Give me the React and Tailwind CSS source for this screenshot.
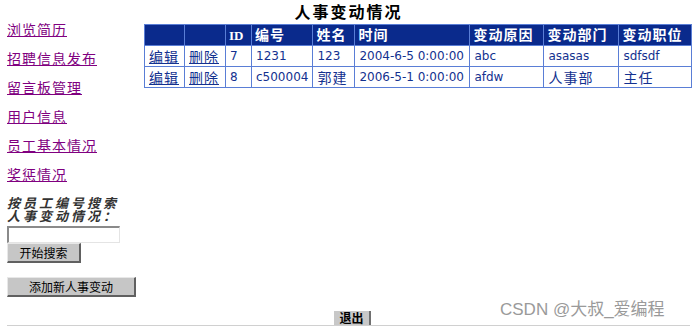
import React from 'react';

// 人事变动情况 page: left menu, change-record table, logout bar

const menuLinks = ['浏览简历', '招聘信息发布', '留言板管理', '用户信息', '员工基本情况', '奖惩情况'];

const records = [
  { id: '7', code: '1231', name: '123', time: '2004-6-5 0:00:00', reason: 'abc', dept: 'asasas', post: 'sdfsdf' },
  { id: '8', code: 'c500004', name: '郭建', time: '2006-5-1 0:00:00', reason: 'afdw', dept: '人事部', post: '主任' },
];

const isCjk = (s) => /[\u4e00-\u9fff]/.test(s);

const Cell = ({ children, className = '' }) => {
  const cjk = typeof children === 'string' && isCjk(children);
  return (
    <td
      className={`border border-[#5a7ed6] px-[4px] h-[21px] text-[#13318f] whitespace-nowrap ${
        cjk ? "text-[14px] tracking-[1px] font-['Noto_Sans_CJK_SC',sans-serif]" : 'text-[12px]'
      } ${className}`}
    >
      {children}
    </td>
  );
};

const Head = ({ children, className = '' }) => (
  <th
    className={`border border-[#5a7ed6] bg-[#0a2a8c] px-[3px] h-[21px] text-left font-bold text-white whitespace-nowrap ${className}`}
  >
    {children}
  </th>
);

const RecordTable = () => (
  <table className="self-start mt-[3px] border-collapse font-['DejaVu_Sans','Noto_Sans_CJK_SC',sans-serif] leading-[19px]">
    <thead>
      <tr>
        <Head className="w-[40px]"></Head>
        <Head className="w-[41px]"></Head>
        <Head className="w-[26px] text-[13px] font-['Liberation_Serif',serif]">ID</Head>
        <Head className="w-[61px] text-[14px] tracking-[1px]">编号</Head>
        <Head className="w-[42px] text-[14px] tracking-[1px]">姓名</Head>
        <Head className="w-[115px] text-[14px] tracking-[1px]">时间</Head>
        <Head className="w-[74px] text-[14px] tracking-[1px]">变动原因</Head>
        <Head className="w-[75px] text-[14px] tracking-[1px]">变动部门</Head>
        <Head className="w-[73px] text-[14px] tracking-[1px]">变动职位</Head>
      </tr>
    </thead>
    <tbody>
      {records.map((r) => (
        <tr key={r.id}>
          <Cell className="underline text-[#0b2a85]">编辑</Cell>
          <Cell className="underline text-[#0b2a85]">删除</Cell>
          <Cell className="px-[3px]">{r.id}</Cell>
          <Cell>{r.code}</Cell>
          <Cell>{r.name}</Cell>
          <Cell>{r.time}</Cell>
          <Cell className="text-[11px]">{r.reason}</Cell>
          <Cell className="text-[11px]">{r.dept}</Cell>
          <Cell className="text-[11px]">{r.post}</Cell>
        </tr>
      ))}
    </tbody>
  </table>
);

const Win95Button = ({ children, className = '' }) => (
  <button
    className={`block bg-[#c6c6c6] border border-t-[#e8e8e8] border-l-[#e8e8e8] border-b-[#606060] border-r-[#606060] border-b-2 border-r-2 text-[12px] leading-none text-black ${className}`}
  >
    {children}
  </button>
);

const Sidebar = () => (
  <div className="w-[144px] shrink-0 pl-[7px] flex flex-col">
    <div className="flex flex-col gap-[15px]">
      {menuLinks.map((t) => (
        <div key={t} className="h-[14px] leading-[14px]">
          <a href="#" className="text-[14px] tracking-[1px] text-[#800080] underline">
            {t}
          </a>
        </div>
      ))}
    </div>
    <div className="mt-[16px] text-[13px] leading-[13px] tracking-[3px] font-bold italic text-[#333]">
      按员工编号搜索
      <br />
      人事变动情况：
    </div>
    <input
      type="text"
      className="block mt-[4px] w-[113px] h-[17px] bg-white border border-t-2 border-l-2 border-t-[#8a8a8a] border-l-[#8a8a8a] border-b-[#e4e4e4] border-r-[#e4e4e4] outline-none"
    />
    <Win95Button className="w-[74px] h-[20px]">开始搜索</Win95Button>
    <Win95Button className="mt-[14px] w-[129px] h-[20px]">添加新人事变动</Win95Button>
  </div>
);

export default function App() {
  return (
    <div className="relative w-[697px] h-[331px] bg-white font-['Noto_Sans_CJK_SC',sans-serif] overflow-hidden">
      <div className="h-[21px] text-center text-[16px] leading-[23px] font-bold tracking-[2px] text-black">
        人事变动情况
      </div>
      <div className="flex">
        <Sidebar />
        <RecordTable />
      </div>
      <div className="flex justify-center mt-[14px] pl-[8px]">
        <button className="w-[37px] h-[14px] bg-[#c8c8c8] border-r-2 border-r-[#707070] text-[12px] leading-[14px] font-bold text-black">
          退出
        </button>
      </div>
      <hr className="mx-[7px] border-t border-[#d0d0d0]" />
      <div className="absolute left-[500px] top-[300px] text-[17px] leading-[20px] text-[#9a9a9a] font-['Liberation_Sans','Noto_Sans_CJK_SC',sans-serif]">
        CSDN @大叔_爱编程
      </div>
    </div>
  );
}
